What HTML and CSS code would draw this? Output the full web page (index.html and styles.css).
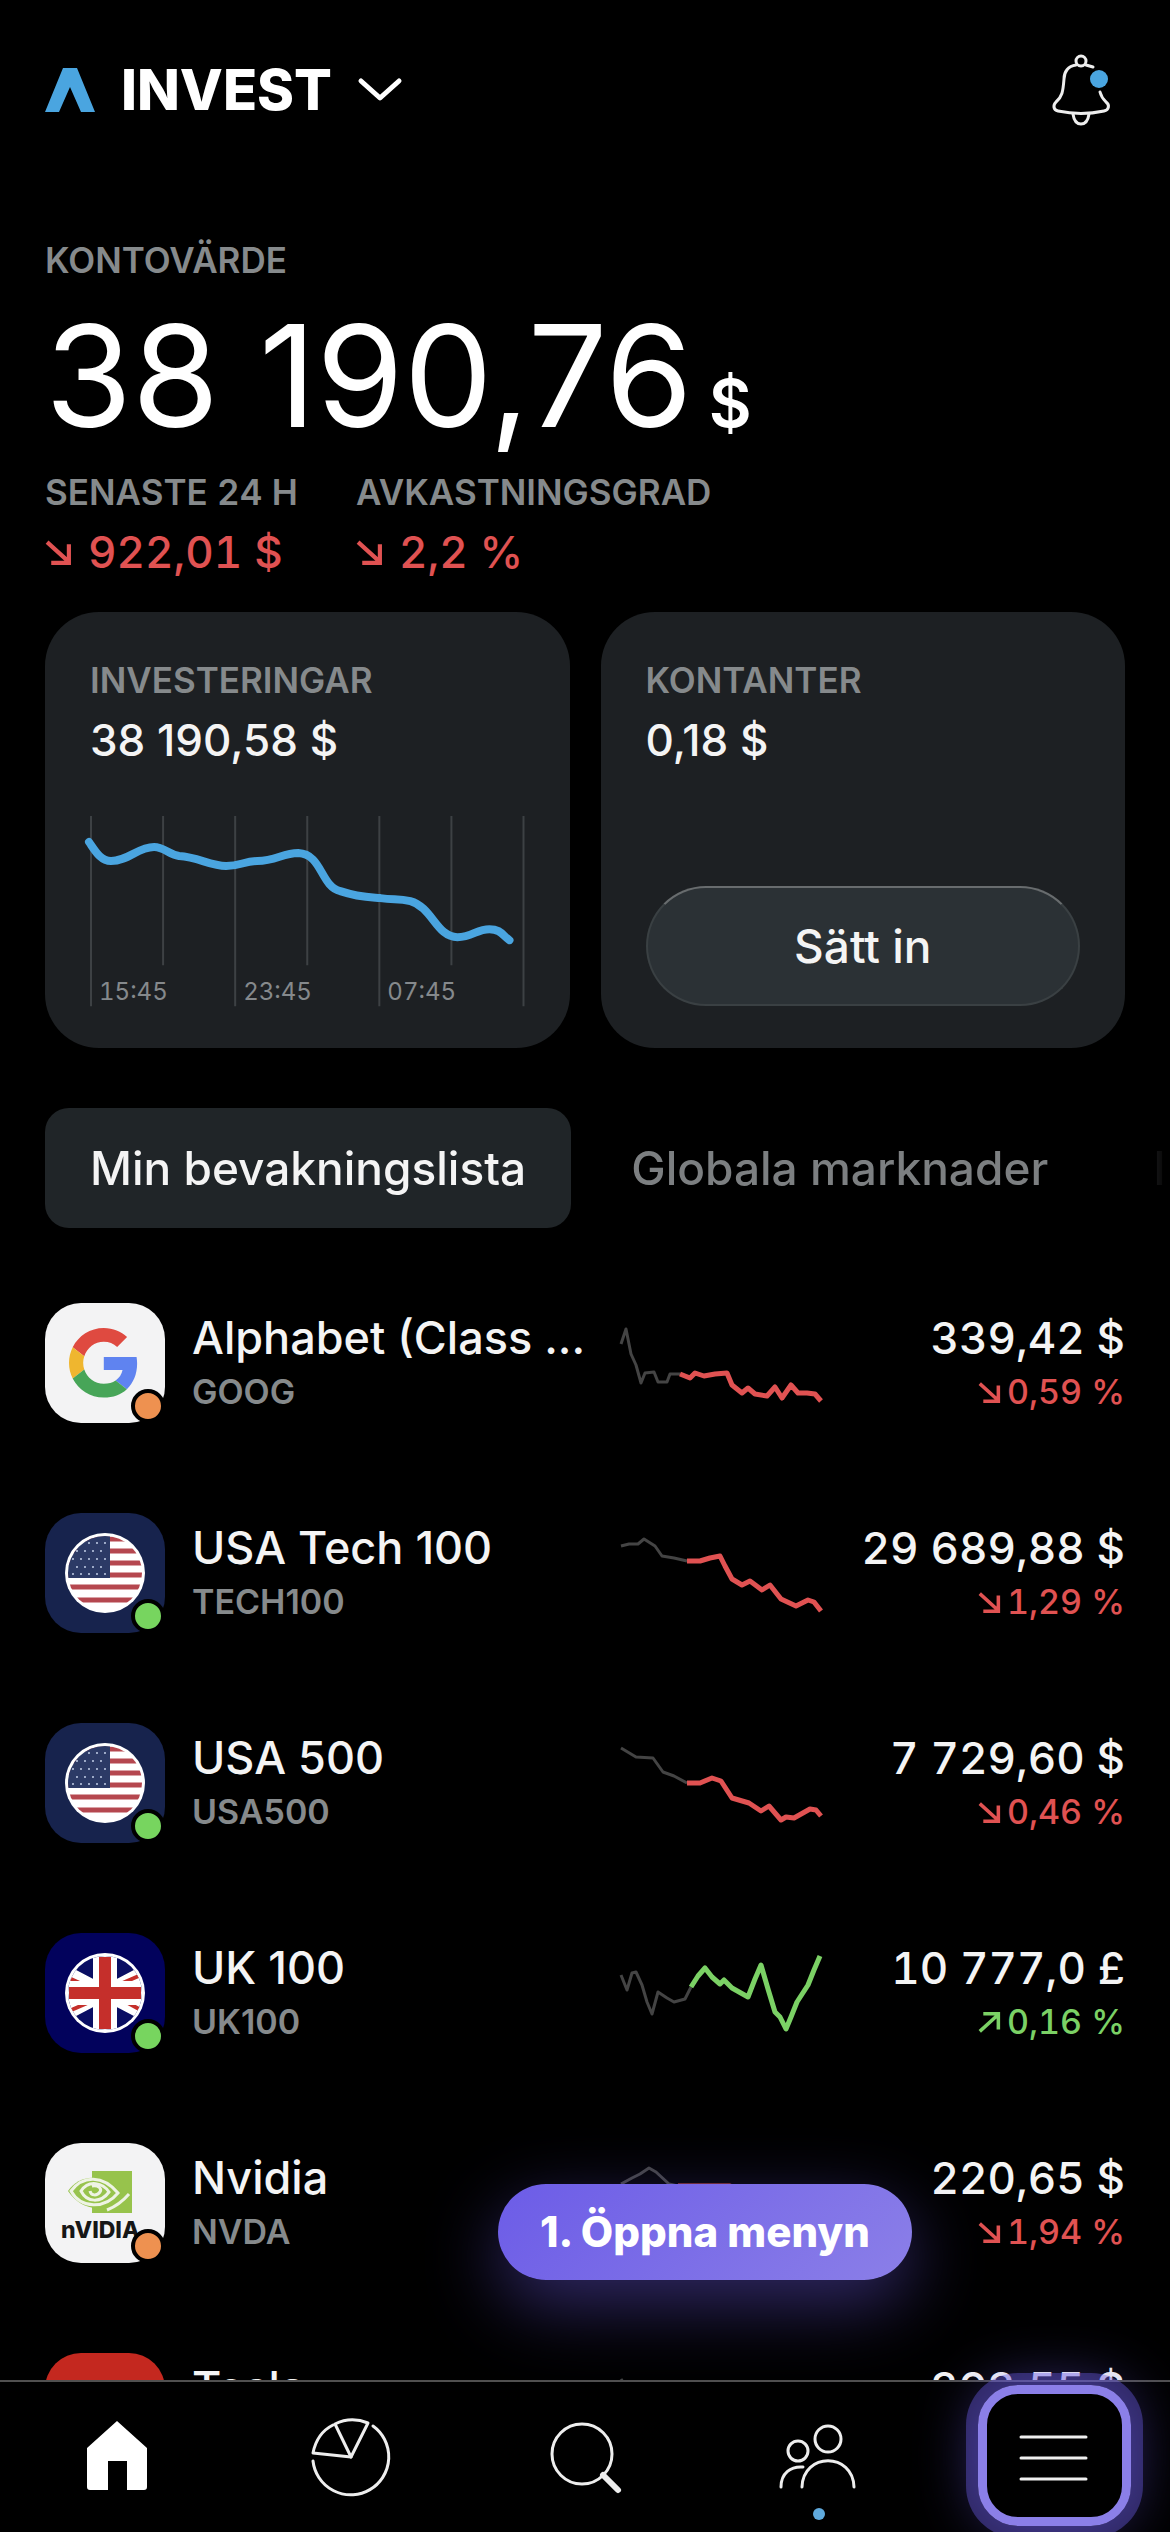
FILE: index.html
```
<!doctype html>
<html lang="sv">
	<head>
		<meta charset="UTF-8">
		<meta name="viewport" content="width=device-width, initial-scale=1">
		<title>Invest</title>
		<link rel="stylesheet" href="styles.css">
	</head>
	<body>
		<!-- shared shapes -->
		<svg class="defs" aria-hidden="true">
			<symbol id="down" viewBox="0 0 26 26">
				<path d="M2 3 L23 22 M23 5 V23 H6" fill="none" stroke="currentColor" stroke-width="4"/>
			</symbol>
			<symbol id="up" viewBox="0 0 26 26">
				<path d="M2 23 L23 4 M23 21 V3 H6" fill="none" stroke="currentColor" stroke-width="4"/>
			</symbol>
			<symbol id="usa" viewBox="0 0 120 120">
				<clipPath id="usa-clip"><circle cx="60" cy="60" r="37"/></clipPath>
				<circle cx="60" cy="60" r="40" fill="#fff"/>
				<g clip-path="url(#usa-clip)">
					<path d="M20 26h80M20 38h80M20 50h80M20 62h80M20 74h80M20 87h80" stroke="#b5474f" stroke-width="5"/>
					<path d="M20 20h45v45H20z" fill="#2c3a66"/>
					<path d="M28 30h36M28 46h36M28 61h36" stroke="#c3cfe8" stroke-width="2" stroke-linecap="round" stroke-dasharray="0 8"/>
					<path d="M32 38h32M32 54h32" stroke="#c3cfe8" stroke-width="2" stroke-linecap="round" stroke-dasharray="0 8"/>
				</g>
			</symbol>
		</svg>

		<main class="page">
			<header class="header">
				<button class="account" type="button">
					<svg width="50" height="44" viewBox="0 0 50 44"><path d="M0 44 L18 0 H32 L50 44 H36 L25 19 L14 44z" fill="#4aa5e0"/></svg>
					<span>INVEST</span>
					<svg width="44" height="24" viewBox="0 0 44 24"><path d="M3 3 L22 20 L41 3" fill="none" stroke="#fff" stroke-width="5" stroke-linecap="round" stroke-linejoin="round"/></svg>
				</button>
				<button class="bell" type="button" aria-label="Aviseringar">
					<svg width="60" height="72" viewBox="0 0 60 72" fill="none" stroke="#eee" stroke-width="3" stroke-linecap="round">
						<circle cx="29" cy="7" r="5"/>
						<path d="M24 11 C16 12 12 18 12 25 C11 38 10 43 4 48 C1 51 1 56 6 57 C20 60 38 60 52 57 C57 56 58 51 54 48 C51 45 49 42 48 38 M34 11 L41 13"/>
						<path d="M21 60 C22 67 25 70 29 70 C33 70 36 67 37 60"/>
						<circle cx="47" cy="25" r="9" fill="#4aa5e0" stroke="none"/>
					</svg>
				</button>
			</header>

			<section class="summary">
				<h2 class="label">KONTOVÄRDE</h2>
				<p class="total">38 190,76<span class="currency">$</span></p>
				<div class="stats">
					<div>
						<h2 class="label">SENASTE 24 H</h2>
						<p class="value down"><svg class="arrow"><use href="#down"/></svg>922,01 $</p>
					</div>
					<div>
						<h2 class="label">AVKASTNINGSGRAD</h2>
						<p class="value down"><svg class="arrow"><use href="#down"/></svg>2,2 %</p>
					</div>
				</div>
			</section>

			<section class="cards">
				<div class="card">
					<h2 class="label">INVESTERINGAR</h2>
					<p class="value">38 190,58 $</p>
					<svg class="chart" viewBox="0 0 434 190">
						<path class="grid" d="M1 0V190M73 0V149M145 0V190M217 0V149M289 0V190M361 0V149M433 0V190"/>
						<path class="line" d="M-1 26 C4 33 10 45 21 45 C38 45 48 31 64 31 C74 31 78 38 89 40 C108 41 120 50 136 50 C150 50 154 45 167 45 C186 45 192 37 208 37 C232 38 230 70 250 75 C268 81 278 81 290 82 C304 84 308 82 320 85 C342 91 346 121 367 121 C382 121 386 113 399 113 C410 113 412 119 419 124"/>
						<text x="9" y="184">15:45</text>
						<text x="153" y="184">23:45</text>
						<text x="297" y="184">07:45</text>
					</svg>
				</div>
				<div class="card">
					<h2 class="label">KONTANTER</h2>
					<p class="value">0,18 $</p>
					<button class="deposit" type="button">Sätt in</button>
				</div>
			</section>

			<div class="tabs">
				<button class="tab active" type="button">Min bevakningslista</button>
				<button class="tab" type="button">Globala marknader</button>
				<button class="tab" type="button">I</button>
			</div>

			<ul class="list">
				<li class="item">
					<div class="logo light closed">
						<svg viewBox="0 0 120 120">
							<g transform="translate(24 25) scale(1.45)">
								<path fill="#df4a40" d="M24 9.5c3.54 0 6.71 1.22 9.21 3.6l6.85-6.85C35.9 2.38 30.47 0 24 0 14.62 0 6.51 5.38 2.56 13.22l7.98 6.19C12.43 13.72 17.74 9.5 24 9.5z"/>
								<path fill="#5f83f0" d="M46.98 24.55c0-1.57-.15-3.09-.38-4.55H24v9.02h12.94c-.58 2.96-2.26 5.48-4.78 7.18l7.73 6c4.51-4.18 7.09-10.36 7.09-17.65z"/>
								<path fill="#efb62f" d="M10.53 28.59c-.48-1.45-.76-2.99-.76-4.59s.27-3.14.76-4.59l-7.98-6.19C.92 16.46 0 20.12 0 24c0 3.88.92 7.54 2.56 10.78l7.97-6.19z"/>
								<path fill="#47a558" d="M24 48c6.48 0 11.93-2.13 15.89-5.81l-7.73-6c-2.15 1.45-4.92 2.3-8.16 2.3-6.26 0-11.57-4.22-13.47-9.91l-7.98 6.19C6.51 42.62 14.62 48 24 48z"/>
							</g>
						</svg>
					</div>
					<div class="name">
						<h3>Alphabet (Class ...</h3>
						<p>GOOG</p>
					</div>
					<svg class="spark down" viewBox="0 0 204 120">
						<polyline class="past" points="1,41 6,26 11,51 16,62 21,80 25,70 34,69 38,79 47,79 50,71 60,71"/>
						<polyline points="60,71 65,73 70,75 75,70 84,73 95,71 107,70 112,82 122,90 128,85 135,91 147,93 155,84 162,95 171,82 178,90 187,90 195,91 201,98"/>
					</svg>
					<div class="price">
						<p class="amount">339,42 $</p>
						<p class="change down"><svg class="arrow"><use href="#down"/></svg>0,59 %</p>
					</div>
				</li>
				<li class="item">
					<div class="logo navy open"><svg viewBox="0 0 120 120"><use href="#usa"/></svg></div>
					<div class="name">
						<h3>USA Tech 100</h3>
						<p>TECH100</p>
					</div>
					<svg class="spark down" viewBox="0 0 204 120">
						<polyline class="past" points="1,33 9,31 18,31 24,26 35,33 42,43 54,45 67,48"/>
						<polyline points="67,48 80,48 90,45 100,43 105,53 112,66 122,72 130,68 142,77 150,72 161,86 176,93 188,87 194,89 201,98"/>
					</svg>
					<div class="price">
						<p class="amount">29 689,88 $</p>
						<p class="change down"><svg class="arrow"><use href="#down"/></svg>1,29 %</p>
					</div>
				</li>
				<li class="item">
					<div class="logo navy open"><svg viewBox="0 0 120 120"><use href="#usa"/></svg></div>
					<div class="name">
						<h3>USA 500</h3>
						<p>USA500</p>
					</div>
					<svg class="spark down" viewBox="0 0 204 120">
						<polyline class="past" points="1,25 16,34 33,35 43,49 54,53 67,60"/>
						<polyline points="67,60 80,60 92,55 101,58 112,75 129,80 141,88 149,83 161,97 166,94 174,95 190,86 196,87 201,93"/>
					</svg>
					<div class="price">
						<p class="amount">7 729,60 $</p>
						<p class="change down"><svg class="arrow"><use href="#down"/></svg>0,46 %</p>
					</div>
				</li>
				<li class="item">
					<div class="logo blue open">
						<svg viewBox="0 0 120 120">
							<clipPath id="uk-clip"><circle cx="60" cy="60" r="37"/></clipPath>
							<circle cx="60" cy="60" r="40" fill="#fff"/>
							<g clip-path="url(#uk-clip)">
								<path d="M20 20h80v80H20z" fill="#0a0e63"/>
								<path d="M12 35L108 85M12 85L108 35" stroke="#fff" stroke-width="14"/>
								<path d="M26 46L50 57M96 42L66 55M94 76L70 63M24 78L54 65" stroke="#c52f2b" stroke-width="4"/>
								<path d="M60 20V100M20 60H100" stroke="#fff" stroke-width="24"/>
								<path d="M60 24V96M24 60H96" stroke="#c52f2b" stroke-width="12"/>
							</g>
						</svg>
					</div>
					<div class="name">
						<h3>UK 100</h3>
						<p>UK100</p>
					</div>
					<svg class="spark up" viewBox="0 0 204 120">
						<polyline class="past" points="1,42 7,57 12,40 16,39 22,52 27,69 32,81 38,59 47,65 54,69 65,66 71,54"/>
						<polyline points="71,54 78,43 85,35 92,44 100,51 104,47 112,55 128,64 135,46 141,32 148,56 155,79 160,84 166,96 171,84 177,69 188,52 194,37 200,23"/>
					</svg>
					<div class="price">
						<p class="amount">10 777,0 £</p>
						<p class="change up"><svg class="arrow"><use href="#up"/></svg>0,16 %</p>
					</div>
				</li>
				<li class="item">
					<div class="logo light closed">
						<svg viewBox="0 0 120 120">
							<path d="M47 28h40v42H47z" fill="#97c34c"/>
							<path d="M23 48C34 32 58 28 78 51C62 70 38 70 23 48z" fill="#97c34c"/>
							<path d="M26 48C38 32 58 32 73 50C60 66 36 66 26 48zM36 48C44 36 58 40 64 49C56 60 42 60 36 48zM47 43C54 42 57 46 55 49C52 53 46 53 45 48M62 67C72 63 78 58 84 51" fill="none" stroke="#eef3e4" stroke-width="3"/>
							<text class="wordmark" x="16" y="95">nVIDIA</text>
						</svg>
					</div>
					<div class="name">
						<h3>Nvidia</h3>
						<p>NVDA</p>
					</div>
					<svg class="spark down" viewBox="0 0 204 120">
						<polyline class="past" points="1,41 12,35 20,31 29,25 36,29 49,41 58,43"/>
						<polyline points="58,43 80,43 110,43 130,60 160,80 201,92"/>
					</svg>
					<div class="price">
						<p class="amount">220,65 $</p>
						<p class="change down"><svg class="arrow"><use href="#down"/></svg>1,94 %</p>
					</div>
				</li>
				<li class="item">
					<div class="logo red"></div>
					<div class="name">
						<h3>Tesla</h3>
					</div>
					<svg class="spark down" viewBox="0 0 204 120">
						<polyline class="past" points="1,26 10,40 30,50 60,60"/>
						<polyline points="60,60 100,70 201,90"/>
					</svg>
					<div class="price">
						<p class="amount">393,55 $</p>
					</div>
				</li>
			</ul>
		</main>

		<nav class="nav">
			<button type="button" aria-label="Hem">
				<svg viewBox="0 0 80 80"><path d="M40 4 L70 31 V70 Q70 73 67 73 H50 V44 H31 V73 H13 Q10 73 10 70 V31z" fill="#fff"/></svg>
			</button>
			<button type="button" aria-label="Portfölj">
				<svg viewBox="0 0 80 80">
					<path d="M62 9 A38 38 0 1 1 2 44"/>
					<path d="M40 40 L57 6 Q40 -1 24 7z"/>
					<path d="M40 40 L2 36 Q6 16 22 8"/>
				</svg>
			</button>
			<button type="button" aria-label="Sök">
				<svg viewBox="0 0 80 80">
					<circle cx="37" cy="37" r="30"/>
					<path d="M58 58 L73 73" stroke-width="6"/>
				</svg>
			</button>
			<button type="button" aria-label="Social" class="dot">
				<svg viewBox="0 0 80 80">
					<circle cx="49" cy="22" r="13"/>
					<circle cx="19" cy="34" r="10"/>
					<path d="M23 70 C24 35 74 35 75 70"/>
					<path d="M2 70 C2 56 12 49 24 50"/>
				</svg>
			</button>
			<button type="button" aria-label="Meny" class="highlight">
				<svg viewBox="0 0 80 80"><path d="M8 20H73M8 41H73M8 62H73"/></svg>
			</button>
			<div class="hint">1. Öppna menyn</div>
		</nav>
	</body>
</html>
```

FILE: styles.css
```
*, *::before, *::after {
	box-sizing: border-box;
}
body {
	margin: 0;
	height: 100vh;
	display: flex;
	flex-direction: column;
	overflow: hidden;
	background-color: #000;
	color: #f4f4f4;
	font-family: Inter, "Liberation Sans", sans-serif;
	font-size: 45px;
	font-weight: 500;
	line-height: 52px;
}
h2, h3, p, ul {
	margin: 0;
	padding: 0;
	font-size: inherit;
	font-weight: inherit;
}
button {
	margin: 0;
	padding: 0;
	border: none;
	background: none;
	color: inherit;
	font: inherit;
	cursor: pointer;
}
svg {
	display: block;
	overflow: visible;
}
.defs {
	position: absolute;
	width: 0;
	height: 0;
}
.page {
	flex: 1;
	min-height: 0;
	overflow: hidden;
	padding: 54px 45px 0;
}

/* header */
.header {
	display: flex;
	justify-content: space-between;
	align-items: center;
	padding-right: 13px;
}
.account {
	display: flex;
	align-items: center;
	gap: 26px;
	color: #fff;
	font-size: 56px;
	font-weight: 800;
	line-height: 72px;
}

/* account value */
.label {
	color: #868a8c;
	font-size: 35px;
	font-weight: 600;
	line-height: 44px;
}
.summary {
	margin-top: 112px;
}
.total {
	display: flex;
	align-items: baseline;
	gap: 16px;
	height: 152px;
	margin-top: 18px;
	color: #fff;
	font-size: 141px;
	font-weight: 400;
	line-height: 152px;
}
.currency {
	font-size: 66px;
	font-weight: 600;
}
.stats {
	display: flex;
	gap: 58px;
	margin-top: 18px;
	font-variant-numeric: tabular-nums;
}
.value {
	display: flex;
	align-items: center;
	gap: 16px;
	margin-top: 12px;
	font-size: 44px;
}
.arrow {
	width: 27px;
	height: 27px;
}
.down {
	color: #e05252;
}
.up {
	color: #7bd165;
}

/* cards */
.cards {
	display: grid;
	grid-template-columns: 1fr 1fr;
	gap: 31px;
	margin-top: 34px;
}
.card {
	display: flex;
	flex-direction: column;
	padding: 46px 45px 42px;
	border-radius: 54px;
	background-color: #1d2023;
}
.chart {
	margin-top: 50px;
}
.chart .grid {
	stroke: #3d4144;
	stroke-width: 2;
}
.chart .line {
	fill: none;
	stroke: #4aa5e0;
	stroke-width: 8;
	stroke-linecap: round;
}
.chart text {
	fill: #85898c;
	font-size: 24px;
	font-weight: 400;
	font-variant-numeric: tabular-nums;
}
.deposit {
	height: 120px;
	margin-top: auto;
	border: 2px solid #3a4043;
	border-top-color: #686c6e;
	border-radius: 60px;
	background-color: #2b3135;
	font-size: 46px;
}

/* tabs */
.tabs {
	display: flex;
	gap: 15px;
	margin-top: 60px;
	margin-right: -45px;
	overflow: hidden;
	-webkit-mask-image: linear-gradient(to left, transparent, #000 90px);
	mask-image: linear-gradient(to left, transparent, #000 90px);
}
.tab {
	height: 120px;
	flex: none;
	padding: 0 45px;
	border-radius: 24px;
	color: #7c7f81;
	font-size: 46px;
}
.tab.active {
	background-color: #202528;
	color: #f4f4f4;
}

/* watchlist */
.list {
	display: flex;
	flex-direction: column;
	gap: 90px;
	margin-top: 75px;
	list-style: none;
}
.item {
	display: grid;
	grid-template-columns: 120px minmax(0, 1fr) 204px 274px;
	gap: 27px;
}
.logo {
	position: relative;
	height: 120px;
	border-radius: 36px;
}
.open::after, .closed::after {
	content: "";
	position: absolute;
	right: 0;
	bottom: 0;
	width: 34px;
	height: 34px;
	border: 4px solid #000;
	border-radius: 50%;
}
.open::after {
	background-color: #77d55f;
}
.closed::after {
	background-color: #ee9150;
}
.light {
	background-color: #f3f3f4;
}
.navy {
	background-color: #17234d;
}
.blue {
	background-color: #02025c;
}
.red {
	background-color: #c4281f;
}
.wordmark {
	fill: #161616;
	font-size: 23px;
	font-weight: 800;
}
.name, .price {
	padding-top: 9px;
	white-space: nowrap;
}
.name p, .change {
	margin-top: 6px;
	font-size: 34px;
	line-height: 44px;
}
.name p {
	color: #868a8c;
	font-weight: 600;
}
.spark {
	height: 120px;
}
.spark polyline {
	fill: none;
	stroke: currentColor;
	stroke-width: 5;
	stroke-linejoin: round;
}
.spark .past {
	stroke: #444;
	stroke-width: 3;
}
.price {
	text-align: right;
	font-variant-numeric: tabular-nums;
}
.amount {
	font-size: 44px;
}
.change {
	display: flex;
	justify-content: flex-end;
	align-items: center;
	gap: 6px;
}
.change .arrow {
	width: 23px;
	height: 23px;
}

/* bottom bar */
.nav {
	position: relative;
	display: grid;
	grid-template-columns: repeat(5, 1fr);
	height: 152px;
	border-top: 2px solid #505050;
	background-color: #000;
}
.nav button {
	position: relative;
	display: flex;
	justify-content: center;
	align-items: center;
}
.nav svg {
	width: 80px;
	height: 80px;
	fill: none;
	stroke: #eee;
	stroke-width: 3;
	stroke-linecap: round;
	stroke-linejoin: round;
}
.nav svg path[fill] {
	stroke: none;
}
.dot::after {
	content: "";
	position: absolute;
	bottom: 12px;
	left: 50%;
	width: 12px;
	height: 12px;
	margin-left: -6px;
	border-radius: 50%;
	background-color: #5fa9dc;
}
.highlight::before {
	content: "";
	position: absolute;
	top: 3px;
	bottom: 6px;
	left: 42px;
	right: 39px;
	border: 9px solid #8b7fe8;
	border-radius: 40px;
	box-shadow: 0 0 0 12px rgba(108, 92, 231, 0.4), 0 0 60px rgba(108, 92, 231, 0.5);
}
.hint {
	position: absolute;
	right: 258px;
	bottom: 252px;
	padding: 22px 42px;
	border-radius: 48px;
	background: linear-gradient(135deg, #6c5ce7, #8b7fe8);
	box-shadow: 0 24px 72px rgba(108, 92, 231, 0.45);
	color: #fff;
	font-size: 42px;
	font-weight: 800;
}
```
